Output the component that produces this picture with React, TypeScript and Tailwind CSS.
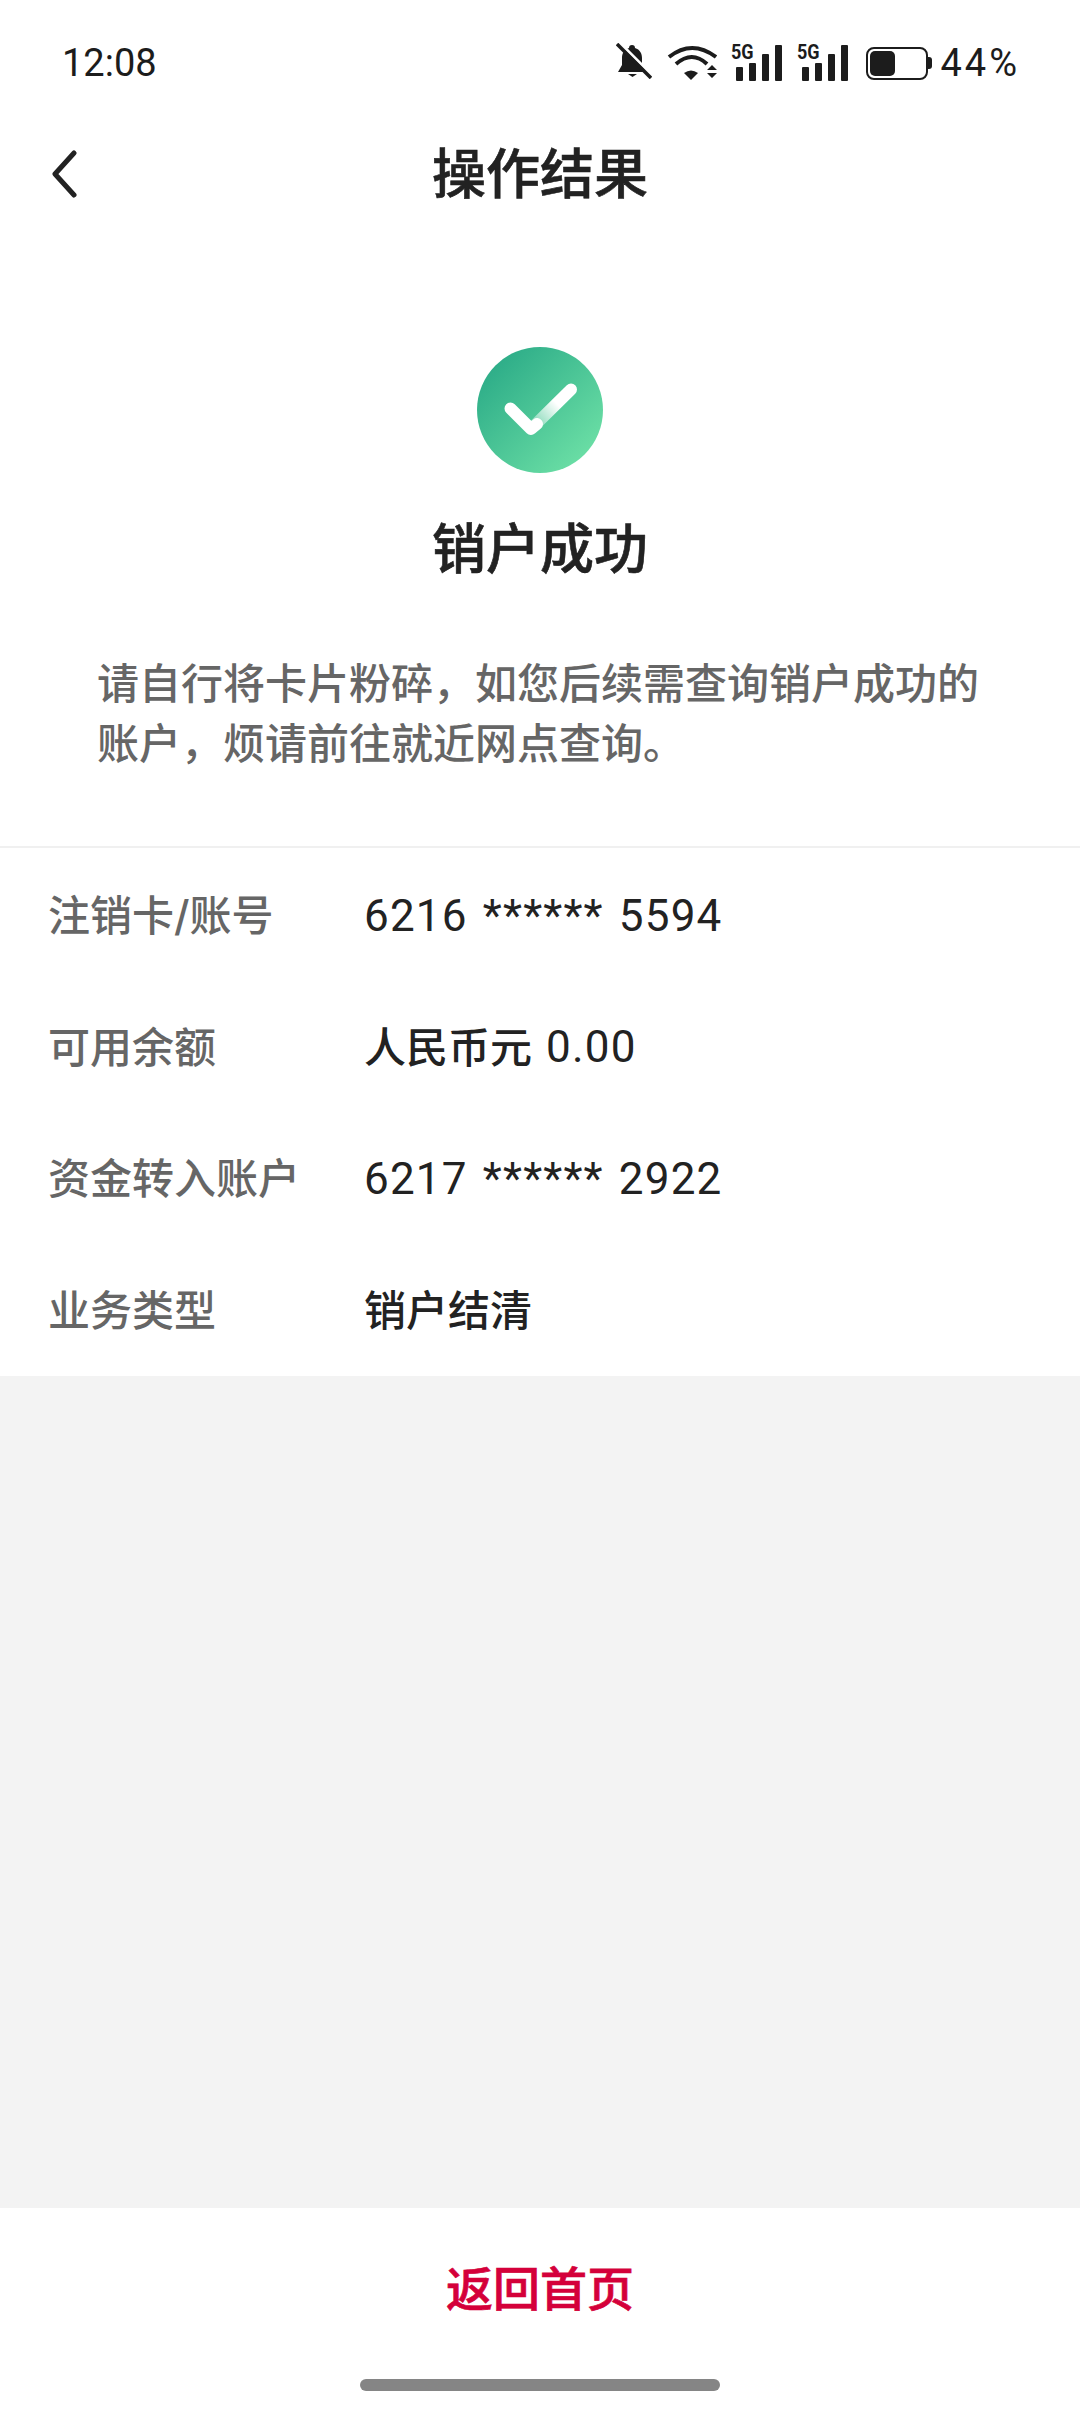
const rows = [
  { label: "注销卡/账号", value: "6216 ****** 5594" },
  { label: "可用余额", prefix: "人民币元", value: "0.00" },
  { label: "资金转入账户", value: "6217 ****** 2922" },
  { label: "业务类型", prefix: "销户结清" },
];

function MuteIcon() {
  return (
    <svg viewBox="0 0 36 36" className="w-[36px] h-[36px] mb-[4px]">
      <path d="M16 2c2 0 3 1 3 3 5 1.500 7 5.500 7 10v7l4 7H2l4-7v-7c0-4.500 2-8.500 7-10 0-2 1-3 3-3z" fill="#1c1c1c" />
      <path d="M12 31h9l-4.500 3z" fill="#1c1c1c" />
      <path d="M4 0l33 33" stroke="#ffffff" strokeWidth="3" />
      <path d="M1 1l34 34" stroke="#1c1c1c" strokeWidth="3.500" />
    </svg>
  );
}

function WifiIcon() {
  return (
    <svg viewBox="0 0 50 36" className="w-[50px] h-[36px] ml-[15px]">
      <path d="M2 12Q25 -6 49 12" fill="none" stroke="#1c1c1c" strokeWidth="4" />
      <path d="M9 19Q25 5 40 19" fill="none" stroke="#1c1c1c" strokeWidth="4" />
      <path d="M17 28Q24 23 31 28L24 35z" fill="#1c1c1c" />
      <path d="M40 25l5-5 5 5zM40 28h10l-5 5z" fill="#1c1c1c" />
    </svg>
  );
}

function SignalIcon({ className }: { className: string }) {
  return (
    <div className={`relative w-[51px] h-[37px] mb-[2px] ${className}`}>
      <span className="absolute left-0 top-[-2px] text-[20px] leading-[20px] font-bold text-[#1c1c1c] font-['Roboto',sans-serif] scale-x-90 origin-left">
        5G
      </span>
      <div className="absolute left-[5px] right-0 bottom-0 flex items-end justify-between">
        <div className="w-[7px] h-[14px] bg-[#1c1c1c] rounded-[1px]" />
        <div className="w-[7px] h-[18px] bg-[#1c1c1c] rounded-[1px]" />
        <div className="w-[7px] h-[27px] bg-[#1c1c1c] rounded-[1px]" />
        <div className="w-[7px] h-[36px] bg-[#1c1c1c] rounded-[1px]" />
      </div>
    </div>
  );
}

function BatteryIcon() {
  return (
    <div className="flex items-center ml-[18px]">
      <div className="w-[62px] h-[33px] rounded-[8px] border-2 border-[#1c1c1c] p-[2px]">
        <div className="w-[25px] h-full rounded-[5px] bg-[#1c1c1c]" />
      </div>
      <div className="w-[4px] h-[12px] rounded-r-[3px] bg-[#1c1c1c]" />
    </div>
  );
}

function SuccessIcon() {
  return (
    <svg viewBox="0 0 126 126" className="w-[126px] h-[126px]">
      <defs>
        <linearGradient id="disc" x1="0.1" y1="0.1" x2="0.9" y2="0.9">
          <stop offset="0" stopColor="#2bab87" />
          <stop offset="1" stopColor="#6de0a6" />
        </linearGradient>
        <linearGradient id="tick" x1="58" y1="78" x2="94" y2="42" gradientUnits="userSpaceOnUse">
          <stop offset="0" stopColor="#ffffff" stopOpacity="0.3" />
          <stop offset="0.6" stopColor="#ffffff" stopOpacity="1" />
        </linearGradient>
      </defs>
      <circle cx="63" cy="63" r="63" fill="url(#disc)" />
      <path d="M58 78L94 42.500" fill="none" stroke="url(#tick)" strokeWidth="12" strokeLinecap="round" />
      <path d="M33.500 61.500L54 82L60 77" fill="none" stroke="#ffffff" strokeWidth="12" strokeLinecap="round" strokeLinejoin="round" />
    </svg>
  );
}

export default function App() {
  return (
    <main className="w-[1080px] h-[2412px] flex flex-col bg-[#f3f3f3] text-[#222222] font-['Inter','Noto_Sans_CJK_SC',sans-serif]">
      <div className="bg-white">
        <header className="h-[126px] pl-[62px] pr-[60px] flex items-center justify-between">
          <span className="text-[38px] text-[#1c1c1c] font-['Roboto',sans-serif]">12:08</span>
          <div className="flex items-center">
            <MuteIcon />
            <WifiIcon />
            <SignalIcon className="ml-[14px]" />
            <SignalIcon className="ml-[15px]" />
            <BatteryIcon />
            <span className="ml-[8px] text-[38px] tracking-[3px] text-[#1c1c1c] font-['Roboto',sans-serif]">44%</span>
          </div>
        </header>

        <div className="relative h-[96px] flex items-center justify-center">
          <svg viewBox="0 0 26 48" className="absolute left-[51px] top-[24px] w-[26px] h-[48px]">
            <path d="M23 3L4 24L23 45" fill="none" stroke="#222222" strokeWidth="5" strokeLinecap="round" strokeLinejoin="round" />
          </svg>
          <h1 className="text-[54px] font-medium [-webkit-text-stroke:0.6px_#222222]">操作结果</h1>
        </div>

        <section className="pt-[125px] flex flex-col items-center">
          <SuccessIcon />
          <h2 className="mt-[45px] text-[54px] leading-[64px] font-medium [-webkit-text-stroke:0.6px_#222222]">销户成功</h2>
          <p className="mt-[72px] w-full pl-[97px] pr-[96px] text-[42px] leading-[60px] font-medium text-[#666666]">
            请自行将卡片粉碎，如您后续需查询销户成功的账户，烦请前往就近网点查询。
          </p>
        </section>

        <div className="mt-[72px] border-t-2 border-[#f0f0f0] pt-[2px]">
          {rows.map((row) => (
            <div key={row.label} className="h-[131.5px] pl-[48px] flex items-center text-[42px] font-medium">
              <span className="w-[316px] text-[#666666]">{row.label}</span>
              <span className="flex items-center gap-[14px] text-[#222222]">
                {row.prefix && <span>{row.prefix}</span>}
                {row.value && (
                  <span className="text-[44px] font-normal tracking-[1.2px] font-['Roboto',sans-serif] [word-spacing:3px]">{row.value}</span>
                )}
              </span>
            </div>
          ))}
        </div>
      </div>

      <div className="flex-1" />

      <footer className="relative h-[204px] bg-white flex justify-center pt-[48px]">
        <span className="text-[47px] leading-[66px] font-medium text-[#d4003a] [-webkit-text-stroke:0.7px_#d4003a]">返回首页</span>
        <div className="absolute left-[360px] top-[171px] w-[360px] h-[12px] rounded-full bg-[#858585]" />
      </footer>
    </main>
  );
}
